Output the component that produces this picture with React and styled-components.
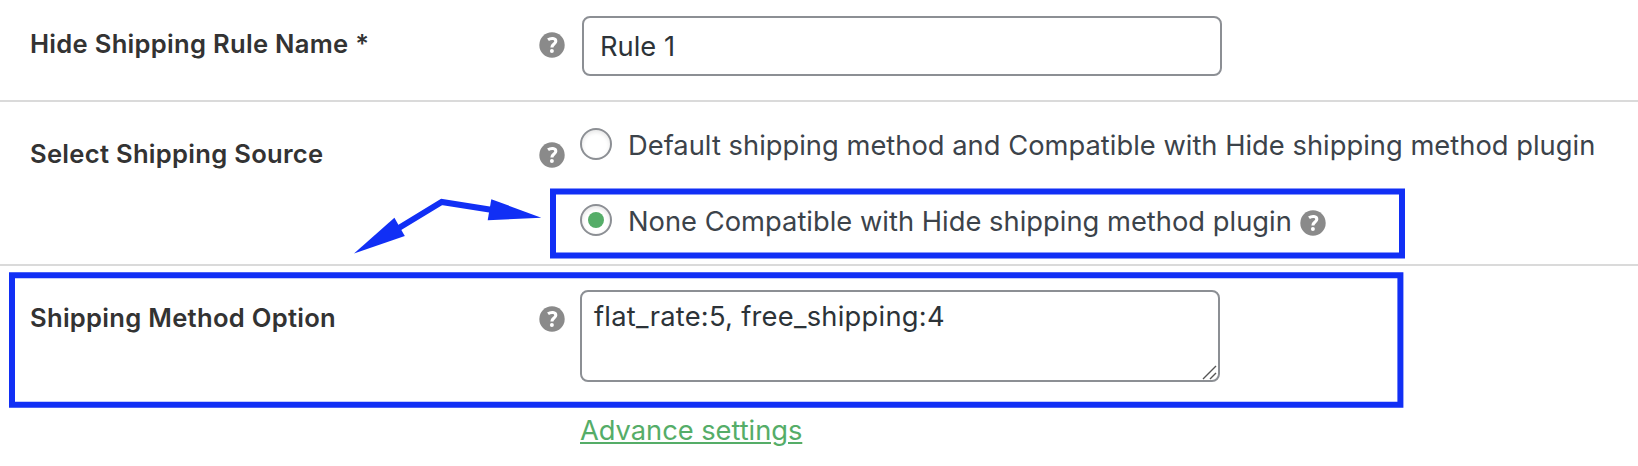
import React from "react";
import styled, { createGlobalStyle } from "styled-components";

const GlobalStyle = createGlobalStyle`
  *, *::before, *::after { box-sizing: border-box; }
  body {
    margin: 0;
    background: #fff;
    font-family: Inter, "Liberation Sans", sans-serif;
    overflow: hidden;
  }
`;

const Page = styled.main`
  position: relative;
  width: 1638px;
  height: 466px;
  background: #fff;
`;

const Row = styled.section`
  display: flex;
  align-items: flex-start;
  height: ${(p) => p.$height}px;
  padding-left: 30px;
  border-bottom: ${(p) => (p.$last ? "0" : "2px solid #dadada")};
`;

const LabelCell = styled.div`
  display: flex;
  justify-content: space-between;
  align-items: center;
  width: 535px;
  height: 26px;
  margin-top: ${(p) => p.$top}px;
`;

const Label = styled.label`
  padding-bottom: 2px;
  color: #333;
  font-size: 25.6px;
  font-weight: 600;
  line-height: 28px;
  letter-spacing: 0.28px;
  white-space: nowrap;
`;

const Field = styled.div`
  display: flex;
  flex-direction: column;
  align-items: flex-start;
  margin-left: ${(p) => p.$left}px;
  padding-top: ${(p) => p.$top}px;
`;

const TextInput = styled.input`
  width: 640px;
  height: 60px;
  padding: 0 16px;
  border: 2px solid #8c8f94;
  border-radius: 8px;
  background: #fff;
  color: #2c3338;
  font-family: inherit;
  font-size: 27.3px;
  outline: 0;
`;

const AreaWrap = styled.div`
  position: relative;
  display: flex;
  width: 640px;
  height: 92px;
`;

const TextArea = styled.textarea`
  width: 100%;
  height: 100%;
  padding: 5px 12px 3px;
  border: 2px solid #8c8f94;
  border-radius: 8px;
  background: #fff;
  color: #2c3338;
  font-family: inherit;
  font-size: 27.3px;
  line-height: 40px;
  letter-spacing: 0.26px;
  resize: none;
  outline: 0;
`;

const Grip = styled.svg`
  position: absolute;
  right: 3px;
  bottom: 2px;
`;

const Option = styled.label`
  display: flex;
  align-items: center;
  height: 32px;
  margin-bottom: 44px;
  color: #3c434a;
  font-size: 27.3px;
  line-height: 32px;
  letter-spacing: 0.02px;
  white-space: nowrap;
`;

const Radio = styled.span`
  display: flex;
  align-items: center;
  justify-content: center;
  flex: none;
  width: 32px;
  height: 32px;
  margin-right: 16px;
  border: 2px solid #8c8f94;
  border-radius: 50%;
  box-shadow: inset 0 2px 4px rgba(0, 0, 0, 0.1);
`;

const Dot = styled.span`
  width: 16px;
  height: 16px;
  border-radius: 50%;
  background: #55ad68;
`;

const OptionText = styled.span`
  padding-top: 4px;
`;

const HelpBadge = styled.span`
  display: flex;
  flex: none;
  margin: ${(p) => p.$margin || "0"};
`;

const AdvanceLink = styled.a`
  margin-top: ${(p) => p.$top}px;
  color: #55ad68;
  font-size: 27.3px;
  line-height: 32px;
  letter-spacing: -0.04px;
  text-decoration: underline;
  text-decoration-thickness: 2px;
  text-underline-offset: 2px;
`;

const Annotations = styled.svg`
  position: absolute;
  inset: 0;
  pointer-events: none;
`;

function Help({ margin }) {
  return (
    <HelpBadge $margin={margin}>
      <svg width="26" height="26" viewBox="0 0 26 26" aria-hidden="true">
        <circle cx="13" cy="13" r="12.7" fill="#8a8a8a" />
        <path
          d="M9 7.8C11.6 5.9 16.8 5.8 16.8 9.2C16.8 12 12.9 12 12.9 15.4"
          fill="none"
          stroke="#fff"
          strokeWidth="3.1"
        />
        <circle cx="12.9" cy="18.9" r="2" fill="#fff" />
      </svg>
    </HelpBadge>
  );
}

export default function App() {
  return (
    <>
      <GlobalStyle />
      <Page>
        <Row $height={102}>
          <LabelCell $top={32}>
            <Label>Hide Shipping Rule Name *</Label>
            <Help />
          </LabelCell>
          <Field $left={17} $top={16}>
            <TextInput defaultValue="Rule 1" />
          </Field>
        </Row>
        <Row $height={164}>
          <LabelCell $top={40}>
            <Label>Select Shipping Source</Label>
            <Help />
          </LabelCell>
          <Field $left={15} $top={26}>
            <Option>
              <Radio />
              <OptionText>Default shipping method and Compatible with Hide shipping method plugin</OptionText>
            </Option>
            <Option>
              <Radio>
                <Dot />
              </Radio>
              <OptionText>None Compatible with Hide shipping method plugin</OptionText>
              <Help margin="6px 0 0 8px" />
            </Option>
          </Field>
        </Row>
        <Row $height={200} $last>
          <LabelCell $top={40}>
            <Label>Shipping Method Option</Label>
            <Help />
          </LabelCell>
          <Field $left={15} $top={24}>
            <AreaWrap>
              <TextArea defaultValue="flat_rate:5, free_shipping:4" />
              <Grip width="15" height="15" viewBox="0 0 15 15" aria-hidden="true">
                <path d="M1 14L14 1M8 14L14 8" stroke="#555" strokeWidth="1.4" fill="none" />
              </Grip>
            </AreaWrap>
            <AdvanceLink $top={33}>Advance settings</AdvanceLink>
          </Field>
        </Row>
        <Annotations width="1638" height="466" viewBox="0 0 1638 466" aria-hidden="true">
          <g fill="none" stroke="#112ff5" strokeWidth="6">
            <path d="M553 191.5H1402V255.5H553Z" />
            <path d="M12 275.2H1400.4V404.8H12Z" />
            <path d="M398 228.5L441.7 202L491 209.8" />
          </g>
          <g fill="#112ff5">
            <path d="M354 253.4L394.4 217.7L404.8 236Z" />
            <path d="M541.3 217.7L491.3 199.2L487.7 220.2Z" />
          </g>
        </Annotations>
      </Page>
    </>
  );
}
